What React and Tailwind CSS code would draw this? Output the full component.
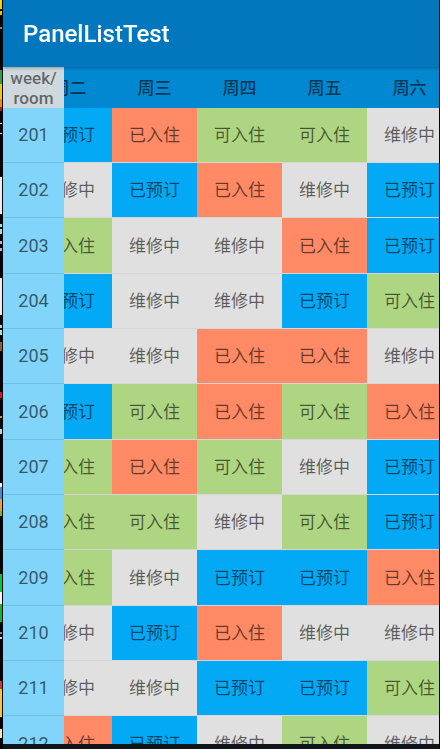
import { useLayoutEffect, useRef } from "react";
import clsx from "clsx";

const DAYS = ["周二", "周三", "周四", "周五", "周六"];

const STATUS = {
  b: { label: "已预订", color: "bg-[#03a9f4]" },
  c: { label: "已入住", color: "bg-[#ff8a65]" },
  f: { label: "可入住", color: "bg-[#aed581]" },
  r: { label: "维修中", color: "bg-[#e0e0e0]" },
};

const ROOMS = [
  ["201", "bcffr"],
  ["202", "rbcrb"],
  ["203", "frrcb"],
  ["204", "brrbf"],
  ["205", "rrccr"],
  ["206", "bfcfc"],
  ["207", "fcfrb"],
  ["208", "ffrfb"],
  ["209", "frbbc"],
  ["210", "rbcrr"],
  ["211", "rrbbf"],
  ["212", "cbrfr"],
];

// Slices of desktop behind the window: [top, height, colour]
const BACKDROP = [
  [0, 9, "#f5d90a"],
  [11, 4, "#e8c800"],
  [27, 2, "#8c8c90"],
  [70, 14, "#2f9e44"],
  [84, 15, "#f2c511"],
  [99, 8, "#f08c1a"],
  [107, 4, "#b02318"],
  [123, 1, "#e8e8e8"],
  [133, 1, "#e8e8e8"],
  [177, 37, "#eeeeee"],
  [224, 3, "#9fe0e8"],
  [229, 5, "#9fe0e8"],
  [241, 3, "#b9b4d8"],
  [248, 3, "#b9b4d8"],
  [278, 37, "#eeeeee"],
  [325, 3, "#9fe0e8"],
  [330, 5, "#9fe0e8"],
  [342, 9, "#8a6238"],
  [392, 6, "#d8142c"],
  [416, 2, "#b99a4a"],
  [429, 5, "#a8dcf0"],
  [483, 4, "#f4f4f4"],
  [487, 12, "#3b8fd6"],
  [499, 12, "#e5a045"],
  [511, 5, "#7fae3a"],
  [574, 18, "#12c23c"],
  [592, 12, "#f4f4f4"],
  [604, 18, "#12b436"],
  [632, 2, "#7488b8"],
  [637, 2, "#d0d4e0"],
  [681, 8, "#c8393b"],
  [689, 28, "#f7c63c"],
  [729, 9, "#f2e4c4"],
];

function Backdrop() {
  return (
    <svg className="h-full w-[3px] shrink-0" aria-hidden="true">
      {BACKDROP.map(([y, h, fill]) => (
        <rect key={y} x="0" y={y} width="2" height={h} fill={fill} />
      ))}
    </svg>
  );
}

function RoomTable() {
  const scroller = useRef(null);

  useLayoutEffect(() => {
    scroller.current.scrollLeft = 37;
  }, []);

  return (
    <div
      ref={scroller}
      className="min-h-0 flex-1 overflow-auto bg-[#e0e0e0] [scrollbar-width:none]"
    >
      <table className="w-full min-w-[486px] table-fixed border-separate border-spacing-0 text-center text-[17px] leading-5 text-black/60">
        <thead>
          <tr className="h-[41px]">
            <th
              scope="col"
              className="sticky left-0 z-10 w-[61px] bg-[#cfd8dc] p-0 pt-px font-medium text-black/54"
            >
              week/
              <br />
              room
            </th>
            {DAYS.map((day) => (
              <th key={day} scope="col" className="bg-[#0288d1] p-0 font-medium">
                {day}
              </th>
            ))}
          </tr>
        </thead>
        <tbody>
          {ROOMS.map(([room, days]) => (
            <tr key={room} className="h-[55px] nth-[3n]:h-14">
              <th
                scope="row"
                className="sticky left-0 z-10 border-b border-[#74bfe1] bg-[#81d4fa] p-0 text-lg leading-5 font-normal"
              >
                {room}
              </th>
              {[...days].map((key, i) => (
                <td
                  key={DAYS[i]}
                  className={clsx("border-b border-[#d6d6d6] p-0", STATUS[key].color)}
                >
                  {STATUS[key].label}
                </td>
              ))}
            </tr>
          ))}
        </tbody>
      </table>
    </div>
  );
}

export default function App() {
  return (
    <div className="flex h-screen overflow-hidden bg-[#05070c] pr-px font-[Roboto,'Noto_Sans_CJK_SC',sans-serif]">
      <Backdrop />
      <main className="flex min-w-0 flex-1 flex-col border-b-5 border-[#10151a]">
        <header className="relative z-20 flex h-[67px] shrink-0 items-center bg-[#0277bd] px-5 shadow-[0_1px_3px_rgba(0,0,0,0.3)]">
          <h1 className="text-2xl font-medium text-white">PanelListTest</h1>
        </header>
        <RoomTable />
      </main>
    </div>
  );
}
